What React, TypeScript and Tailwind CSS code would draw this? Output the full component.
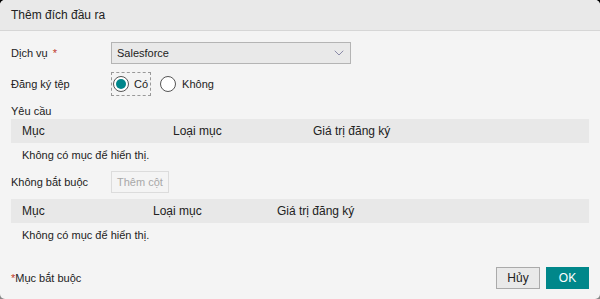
import { ChevronDown } from 'lucide-react';

function TableBlock({ cols }: { cols: [string, string, string]; }) {
  return (
    <div className="mr-[11px]">
      <div className="flex h-6 items-center bg-[#e8e8e8] pl-[11px] text-[12px]">
        <span className={cols[0]}>Mục</span>
        <span className={cols[1]}>Loại mục</span>
        <span>Giá trị đăng ký</span>
      </div>
      <div className="flex h-[24px] items-center pl-[11px]">Không có mục để hiển thị.</div>
    </div>
  );
}

export default function App() {
  return (
    <div className="h-[299px] w-[600px] bg-gradient-to-b from-black to-[#888]">
      <div
        className="flex h-full flex-col overflow-hidden rounded-[5px] bg-[#f4f4f4] text-[11px] text-[#222]"
        style={{ fontFamily: '"Liberation Sans", Arial, sans-serif' }}
      >
        <div className="flex h-[31px] shrink-0 items-center border-b border-[#d6d6d6] bg-[#e9e9e9] pl-[11px] text-[12px]">
          Thêm đích đầu ra
        </div>

        <div className="flex flex-1 flex-col pt-[11px]">
          <div className="flex h-[22px] items-center">
            <div className="w-[111px] pl-[11px]">
              Dịch vụ <span className="ml-[2px] text-[#c0392b]">*</span>
            </div>
            <div className="flex h-[22px] w-[240px] items-center justify-between border border-[#b4b4b4] bg-[#e9e9e9] pl-[5px] pr-[3px]">
              <span>Salesforce</span>
              <ChevronDown className="h-4 w-4 text-[#8a8aa8]" strokeWidth={1.5} />
            </div>
          </div>

          <div className="mt-[8px] flex h-[24px] items-center">
            <div className="w-[111px] pl-[11px]">Đăng ký tệp</div>
            <div className="flex h-[24px] items-center gap-[5px] border border-dashed border-[#999] pl-[1px] pr-[2px]">
              <span className="flex h-[16px] w-[16px] items-center justify-center rounded-full border border-[#555] bg-white">
                <span className="h-[10px] w-[10px] rounded-full bg-[#00868b]" />
              </span>
              <span>Có</span>
            </div>
            <div className="ml-[9px] flex items-center gap-[6px]">
              <span className="h-[16px] w-[16px] rounded-full border border-[#555] bg-white" />
              <span>Không</span>
            </div>
          </div>

          <div className="mt-[7px] pl-[11px] leading-[16px]">Yêu cầu</div>
          <div className="ml-[11px]">
            <TableBlock cols={['w-[151px]', 'w-[140px]', '']} />
          </div>

          <div className="mt-[4px] flex h-[22px] items-center">
            <div className="w-[111px] pl-[11px]">Không bắt buộc</div>
            <div className="flex h-[22px] items-center border border-[#dcdcdc] px-[5px] text-[#a8a8a8]">Thêm cột</div>
          </div>

          <div className="ml-[11px] mt-[6px]">
            <TableBlock cols={['w-[131px]', 'w-[124px]', '']} />
          </div>

          <div className="mt-auto mb-[10px] flex items-center justify-between pl-[11px] pr-[11px]">
            <div>
              <span className="text-[#c0392b]">*</span>Mục bắt buộc
            </div>
            <div className="flex gap-[6px]">
              <button className="h-[22px] w-[44px] border border-[#aaa] bg-[#e9e9e9] text-[12px] text-[#222]">Hủy</button>
              <button className="h-[22px] w-[43px] bg-[#00878a] text-[12px] text-white">OK</button>
            </div>
          </div>
        </div>
      </div>
    </div>
  );
}
